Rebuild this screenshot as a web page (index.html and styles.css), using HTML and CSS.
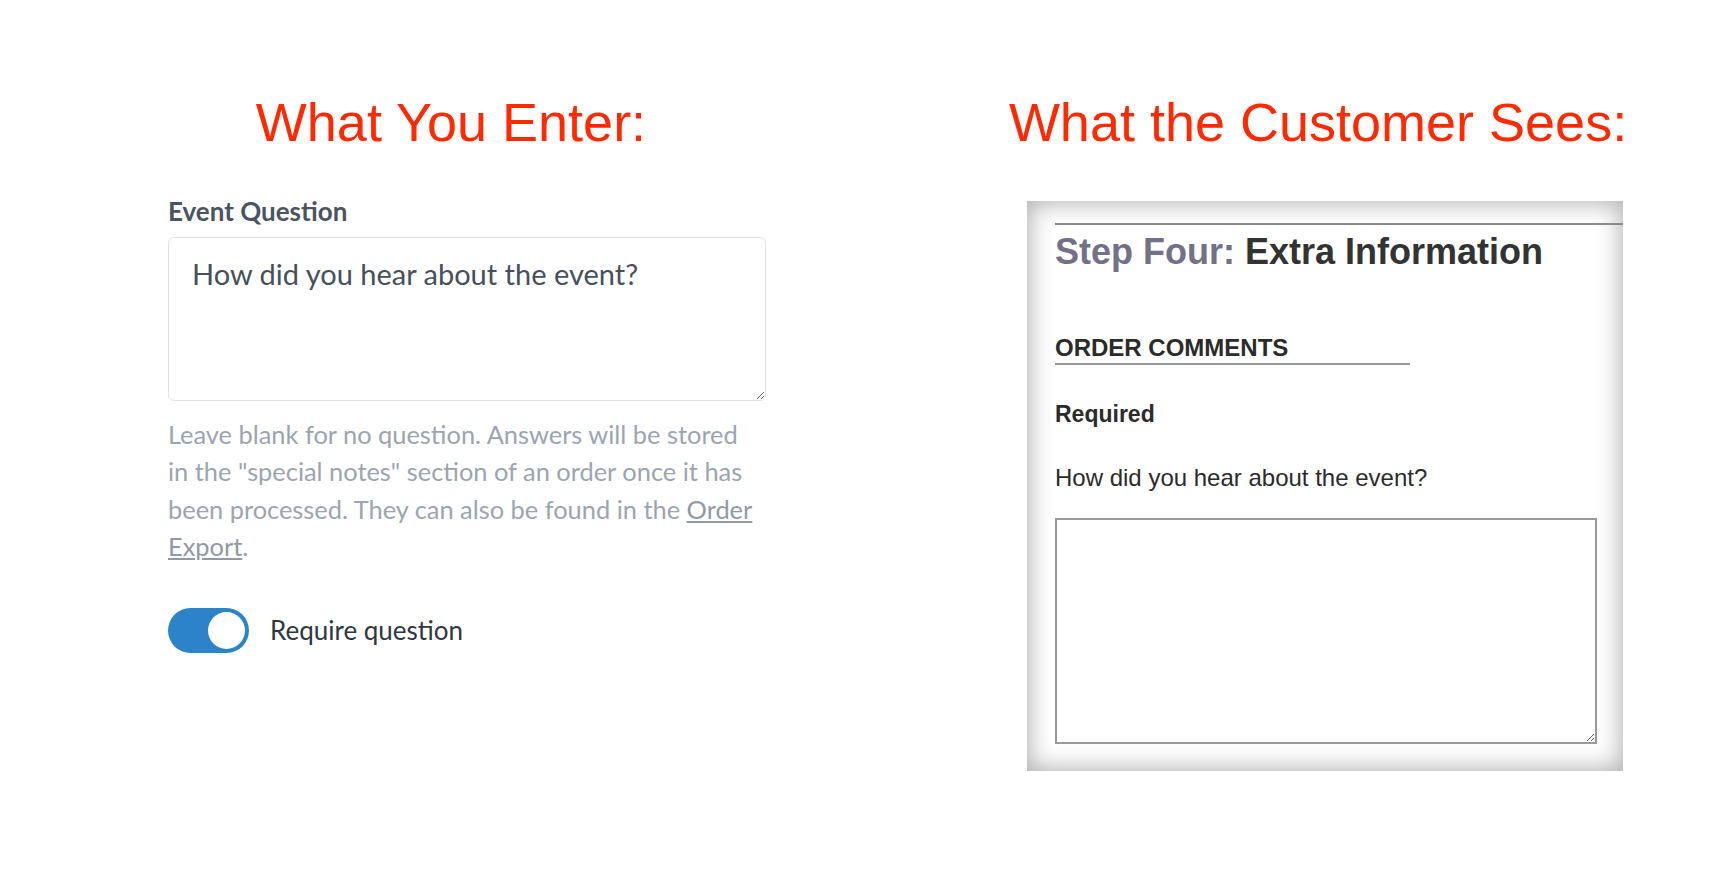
FILE: index.html
```html
<!DOCTYPE html>
<html lang="en">
<head>
    <meta charset="UTF-8">
    <meta name="viewport" content="width=device-width, initial-scale=1.0">
    <title>Event question</title>
    <link rel="stylesheet" href="styles.css">
</head>
<body>
    <main class="compare">
        <section class="side side-admin">
            <h2 class="side-title title-admin">What You Enter:</h2>
            <div class="field">
                <label class="field-label" for="event_question">Event Question</label>
                <textarea id="event_question" class="field-input">How did you hear about the event?</textarea>
                <p class="field-help">Leave blank for no question. Answers will be stored in the "special notes" section of an order once it has been processed. They can also be found in the <a href="#">Order Export</a>.</p>
                <label class="switch-row">
                    <input class="switch-box" type="checkbox" checked>
                    <span class="switch"></span>
                    <span class="switch-text">Require question</span>
                </label>
            </div>
        </section>
        <section class="side side-customer">
            <h2 class="side-title title-customer">What the Customer Sees:</h2>
            <div class="preview">
                <hr class="preview-rule">
                <h3 class="step"><span class="step-num">Step Four:</span> Extra Information</h3>
                <h4 class="block-title">ORDER COMMENTS</h4>
                <p class="required">Required</p>
                <p class="question">How did you hear about the event?</p>
                <textarea class="answer"></textarea>
            </div>
        </section>
    </main>
</body>
</html>
```
FILE: styles.css
```css
body{margin:0;background:#fff;}
.compare{display:flex;padding:95px 0 0 168px;}
.side{display:flex;flex-direction:column;}
.side-admin{width:598px;}
.side-customer{width:596px;margin-left:261px;}

.side-title{
    display:flex;
    justify-content:center;
    white-space:nowrap;
    margin:0;
    font:400 54px/1 "Liberation Sans", Arial, sans-serif;
    color:#ff2a00;
}
.title-admin{padding-right:32px;}
.title-customer{padding-right:14px;}

/* left side, admin form */
.field{display:flex;flex-direction:column;margin-top:48px;font-family:Lato, "Open Sans", sans-serif;}
.field-label{font-size:26px;line-height:29px;font-weight:700;color:#4a5461;}
.field-input{
    box-sizing:border-box;
    margin-top:11px;
    width:598px;height:164px;
    padding:19px 23px;
    border:1px solid #dfe3e8;border-radius:6px;
    font:400 29px/1.2 Lato, sans-serif;
    color:#46505c;
    resize:vertical;
    outline:none;
}
.field-help{width:590px;margin:15px 0 0;font-size:25.4px;line-height:37.4px;color:#9aa5b1;}
.field-help a{color:#8f9aa6;}
.switch-row{display:flex;align-items:center;gap:21px;margin-top:42px;cursor:pointer;}
.switch-box{display:none;}
.switch{
    box-sizing:border-box;
    display:flex;justify-content:flex-end;align-items:center;
    width:81px;height:45px;padding:4px;
    border-radius:23px;background:#2a84c7;
}
.switch::after{content:"";width:37px;height:37px;border-radius:50%;background:#fff;}
.switch-text{font-size:26px;color:#2f3742;}

/* right side, customer preview */
.preview{
    box-sizing:border-box;
    margin-top:52px;
    height:570px;
    padding:22px 0 0 28px;
    background:#fff;
    box-shadow:inset 0 0 24px 2px rgba(0,0,0,.32);
    font-family:"Liberation Sans", Arial, sans-serif;
    color:#333;
}
.preview-rule{margin:0;border:0;border-top:2px solid #8a8a8a;}
.step{margin:6px 0 0;font-size:36px;line-height:41px;font-weight:700;color:#333;}
.step-num{color:#737087;}
.block-title{width:355px;margin:62px 0 0;padding-bottom:1px;border-bottom:2px solid #999;font-size:24px;line-height:28px;font-weight:700;color:#2b2b2b;}
.required{margin:35px 0 0;font-size:23px;line-height:28px;font-weight:700;color:#2b2b2b;}
.question{margin:36px 0 0;font-size:24px;line-height:28px;color:#2b2b2b;}
.answer{box-sizing:border-box;margin-top:26px;width:542px;height:226px;border:2px solid #999;background:#fff;}
```
